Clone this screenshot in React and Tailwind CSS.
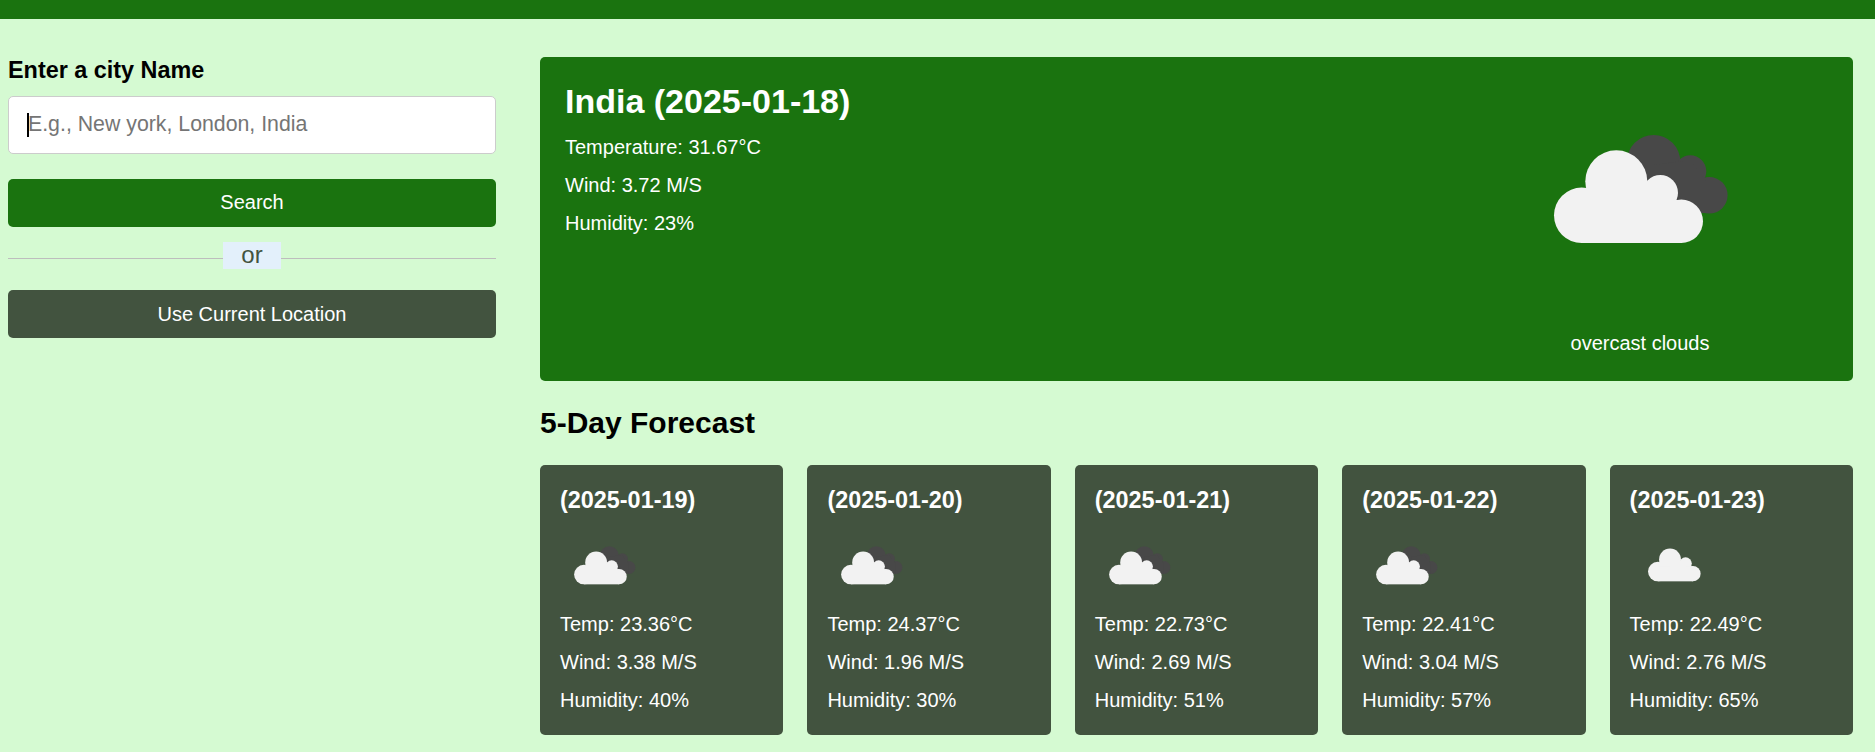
const forecast = [
  { date: "2025-01-19", temp: "23.36", wind: "3.38", humidity: 40 },
  { date: "2025-01-20", temp: "24.37", wind: "1.96", humidity: 30 },
  { date: "2025-01-21", temp: "22.73", wind: "2.69", humidity: 51 },
  { date: "2025-01-22", temp: "22.41", wind: "3.04", humidity: 57 },
  { date: "2025-01-23", temp: "22.49", wind: "2.76", humidity: 65, light: true },
];

// Cloud drawn in a 252 box so the same shape scales for the big and small icons
function CloudIcon({ className, light }) {
  return (
    <svg viewBox="0 0 252 252" className={className}>
      {!light && (
        <g fill="#484848">
          <circle cx="139.6" cy="86.7" r="26.7" />
          <circle cx="176.3" cy="96.3" r="16" />
          <circle cx="195.3" cy="120.3" r="18.3" />
          <path d="M140 90 L176 85 L195 110 L195 138 L140 138 Z" />
        </g>
      )}
      <g fill="#f2f2f2" transform={light ? "translate(11 -8.5)" : undefined}>
        <circle cx="67.7" cy="140.3" r="27.7" />
        <circle cx="102.3" cy="106.3" r="31" />
        <circle cx="146.3" cy="117.7" r="17.7" />
        <circle cx="167.3" cy="146.3" r="21.7" />
        <rect x="67.7" y="125" width="99.6" height="43" />
        <rect x="100" y="110" width="50" height="20" />
      </g>
    </svg>
  );
}

export default function App() {
  return (
    <div className="min-h-[752px] overflow-hidden bg-[#d5fad2] font-['Liberation_Sans',Arial,sans-serif] text-[20px] leading-[23px] text-black">
      <div className="h-[19px] bg-[#1a730f]" />

      <div className="flex gap-[44px] pt-[38px] pl-2 pr-[22px]">
        {/* Search column */}
        <div className="w-[488px] shrink-0">
          <h3 className="mt-[1px] text-[23.4px] leading-[25px] font-bold">Enter a city Name</h3>
          <div className="relative mt-[13px]">
            <input
              type="text"
              placeholder="E.g., New york, London, India"
              className="block h-[58px] w-full rounded-[5px] border border-[#ccc] bg-white px-[19px] pb-[2px] text-[21.3px] placeholder:text-[#757575] caret-transparent outline-none"
            />
            <span className="absolute top-[17px] left-[19px] h-6 w-[2px] bg-black" />
          </div>
          <button className="mt-[25px] block h-12 w-full rounded-[5px] bg-[#1a730f] pb-[2px] text-center text-white">
            Search
          </button>
          <div className="relative mt-[15px] flex h-[27px] items-center justify-center">
            <div className="absolute top-[16px] right-0 left-0 h-px bg-[#bdbdbd]" />
            <span className="relative flex h-[27px] w-[58px] items-center justify-center bg-[#e3f0fb] pb-[2px] text-[24px] text-[#42533f]">or</span>
          </div>
          <button className="mt-[21px] block h-12 w-full rounded-[5px] bg-[#42533f] text-center text-white">
            Use Current Location
          </button>
        </div>

        {/* Weather column */}
        <div className="min-w-0 flex-1">
          <div className="flex h-[324px] justify-between rounded-[5px] bg-[#1a730f] pt-[25px] pr-[87px] pl-[25px] text-white">
            <div>
              <h2 className="text-[34px] leading-[39px] font-bold">India (2025-01-18)</h2>
              <p className="mt-[15px]">Temperature: 31.67°C</p>
              <p className="mt-[15px]">Wind: 3.72 M/S</p>
              <p className="mt-[15px]">Humidity: 23%</p>
            </div>
            <div className="-mt-[7px] flex flex-col items-center">
              <CloudIcon className="h-[252px] w-[252px]" />
              <p className="mt-[5px]">overcast clouds</p>
            </div>
          </div>

          <h2 className="mt-6 text-[30px] leading-[35px] font-bold">5-Day Forecast</h2>

          <div className="mt-[25px] grid grid-cols-5 gap-[24px]">
            {forecast.map((day) => (
              <div key={day.date} className="h-[270px] rounded-[5px] bg-[#42533f] px-5 pt-[22px] text-white">
                <h3 className="text-[23.4px] leading-[27px] font-bold">({day.date})</h3>
                <CloudIcon className="mt-[11px] h-[89px] w-[89px]" light={day.light} />
                <p className="mt-[-1px]">Temp: {day.temp}°C</p>
                <p className="mt-[15px]">Wind: {day.wind} M/S</p>
                <p className="mt-[15px]">Humidity: {day.humidity}%</p>
              </div>
            ))}
          </div>
        </div>
      </div>
    </div>
  );
}
